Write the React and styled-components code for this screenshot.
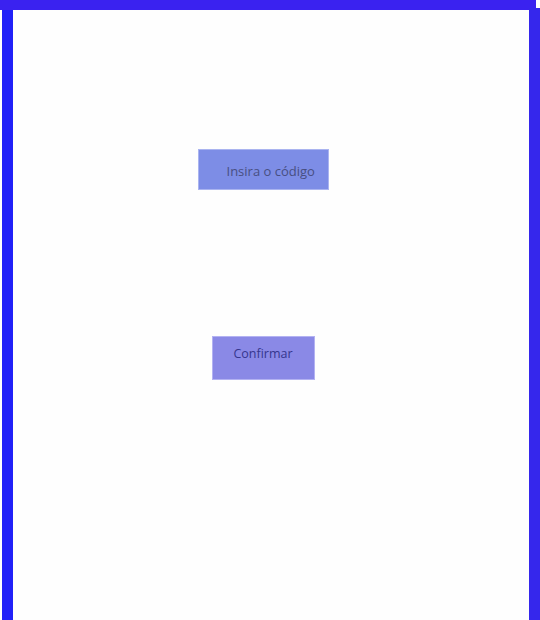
import React from "react"
import styled, { createGlobalStyle } from "styled-components"

const Global = createGlobalStyle`
  body {
    margin: 0;
    background: #fefefe;
  }
`

const Page = styled.div`
  width: 540px;
  height: 620px;
  display: flex;
  flex-direction: column;
  overflow: hidden;
`

const TopBar = styled.div`
  width: 536px;
  height: 10px;
  background: #3a22f0;
  flex-shrink: 0;
`

const Body = styled.div`
  flex: 1;
  display: flex;
  padding-left: 2px;
`

const SideBar = styled.div`
  width: 11px;
  background: ${(p) => p.color};
  margin-top: ${(p) => (p.raised ? "-2px" : "0")};
  flex-shrink: 0;
`

const Content = styled.div`
  flex: 1;
  display: flex;
  flex-direction: column;
  align-items: center;
  padding-top: 139px;
  padding-right: 16px;
  gap: 146px;
`

const CodeInput = styled.input`
  box-sizing: border-box;
  width: 131px;
  height: 41px;
  padding: 2px 0 0 28px;
  background: #7d8de6;
  border: 1px solid #aab4f0;
  outline: none;
  font-family: "Open Sans", sans-serif;
  font-size: 13px;
  color: #484f82;

  &::placeholder {
    color: #484f82;
    opacity: 1;
  }
`

const ConfirmButton = styled.button`
  box-sizing: border-box;
  width: 103px;
  height: 44px;
  padding: 0 0 9px;
  background: #8a89e6;
  border: 1px solid #b3b2f2;
  font-family: "Open Sans", sans-serif;
  font-size: 12.5px;
  color: #35368e;
  cursor: pointer;
`

export default function App() {
  return (
    <Page>
      <Global />
      <TopBar />
      <Body>
        <SideBar color="#2121f8" />
        <Content>
          <CodeInput placeholder="Insira o código" />
          <ConfirmButton>Confirmar</ConfirmButton>
        </Content>
        <SideBar color="#3527ec" raised />
      </Body>
    </Page>
  )
}
